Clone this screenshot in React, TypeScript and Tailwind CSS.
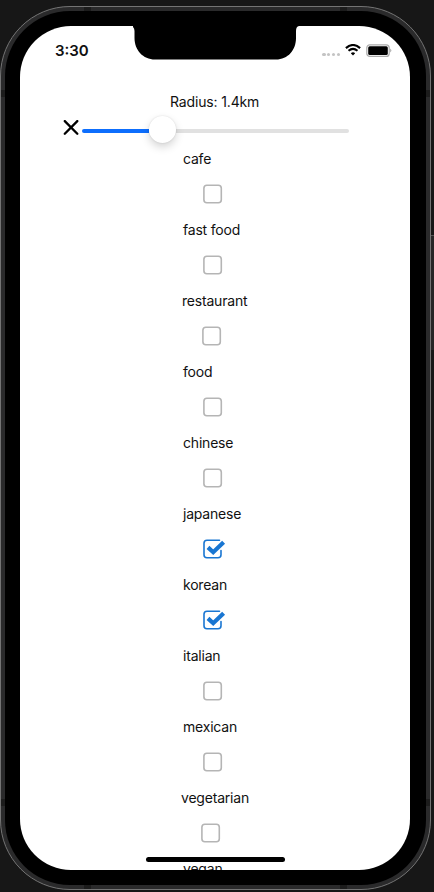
type Category = { name: string; checked?: boolean; text: string; box: string };

const categories: Category[] = [
  { name: "cafe", text: "ml-[163px]", box: "ml-[183px]" },
  { name: "fast food", text: "ml-[163px]", box: "ml-[183px]" },
  { name: "restaurant", text: "ml-[162px]", box: "ml-[182px]" },
  { name: "food", text: "ml-[163px]", box: "ml-[183px]" },
  { name: "chinese", text: "ml-[163px]", box: "ml-[183px]" },
  { name: "japanese", checked: true, text: "ml-[163px]", box: "ml-[183px]" },
  { name: "korean", checked: true, text: "ml-[163px]", box: "ml-[183px]" },
  { name: "italian", text: "ml-[163px]", box: "ml-[183px]" },
  { name: "mexican", text: "ml-[163px]", box: "ml-[183px]" },
  { name: "vegetarian", text: "ml-[161px]", box: "ml-[181px]" },
  { name: "vegan", text: "ml-[163px]", box: "ml-[183px]" },
];

function Checkbox({ checked }: { checked?: boolean }) {
  return (
    <svg width="24" height="20" viewBox="0 0 24 20" fill="none">
      {checked ? (
        <>
          <path
            d="M16.5 1.3H4A3 3 0 0 0 1 4.3V15.7A3 3 0 0 0 4 18.7H15A3 3 0 0 0 18 15.7V11.5"
            stroke="#1976d2"
            strokeWidth="1.6"
            strokeLinecap="round"
          />
          <path d="M5 8.4L10.2 13.2L20.6 3.3" stroke="#1976d2" strokeWidth="4.2" />
        </>
      ) : (
        <rect x="0.9" y="1.2" width="17.4" height="17.6" rx="3" stroke="#b5b5b5" strokeWidth="1.6" />
      )}
    </svg>
  );
}

function StatusBar() {
  return (
    <header className="relative flex h-[66px] items-start">
      <span className="ml-[35px] mt-[15px] text-[15px] font-semibold leading-[20px]">3:30</span>
      <svg className="absolute left-[113px] top-0" width="166" height="34" viewBox="0 0 166 34">
        <path d="M-3 -1H168V0H167Q163 0 163 5V12C163 24 155 33.5 143 33.5H22C10 33.5 1.5 24 1.5 12V5Q1.5 0 -3 0Z" fill="#000" />
      </svg>
      <div className="ml-auto mr-[18px] mt-[15px] flex h-[18px] items-center">
        <div className="mr-[5px] mt-[9px] flex gap-[1.5px]">
          {[0, 1, 2, 3].map((i) => (
            <span key={i} className="size-[3.3px] rounded-full bg-[#c4c4c4]" />
          ))}
        </div>
        <svg width="16" height="12" viewBox="0 0 16 12" fill="none" stroke="#000">
          <path d="M.9 4.1Q8-2.1 15.1 4.1" strokeWidth="2.1" />
          <path d="M3.5 6.8Q8 2.9 12.5 6.8" strokeWidth="2" />
          <path d="M8 11.5L5.8 9.3Q8 7.4 10.2 9.3Z" fill="#000" stroke="none" />
        </svg>
        <svg className="ml-[5px]" width="26" height="13" viewBox="0 0 26 13">
          <rect x=".8" y=".8" width="22.4" height="11.6" rx="3" fill="#fff" stroke="#aaa" strokeWidth="1.2" />
          <rect x="2.2" y="2.2" width="19.6" height="8.8" rx="1.5" />
          <path d="M24.2 4.6Q26.5 6.5 24.2 8.4Z" fill="#aaa" />
        </svg>
      </div>
    </header>
  );
}

function RadiusSlider() {
  return (
    <section className="h-[55px]">
      <div className="ml-[150px] flex h-[19px] items-center whitespace-nowrap text-[14px] tracking-[-0.15px]">Radius: 1.4km</div>
      <div className="ml-[43px] flex h-[36px] items-start">
        <svg className="mt-[9px]" width="16" height="16" viewBox="0 0 16 16" fill="none" stroke="#000" strokeWidth="2.3" strokeLinecap="round">
          <path d="M1.8 1.1L14.3 13.7M14.3 1.1L1.8 13.7" />
        </svg>
        <div className="ml-[2.5px] flex h-[39px] w-[267px] items-center">
          <div className="h-[4px] w-[67px] rounded-l-full bg-[#0d6efd]" />
          <div className="z-10 mb-[2px] size-[27px] rounded-full bg-white shadow-[0_4px_9px_rgba(0,0,0,0.17),0_0_2px_rgba(0,0,0,0.12)]" />
          <div className="h-[4px] flex-1 rounded-r-full bg-[#e1e1e1]" />
        </div>
      </div>
    </section>
  );
}

const marks = [
  "left-[84px] top-[7px] h-[4px] w-[7px]",
  "left-[340px] top-[7px] h-[4px] w-[7px]",
  "left-[84px] top-[885px] h-[4px] w-[7px]",
  "left-[340px] top-[885px] h-[4px] w-[7px]",
  "left-[1px] top-[90px] h-[7px] w-[4px]",
  "left-[426px] top-[90px] h-[7px] w-[4px]",
  "left-[1px] top-[799px] h-[7px] w-[4px]",
  "left-[426px] top-[799px] h-[7px] w-[4px]",
];

export default function App() {
  return (
    <div className="relative h-[892px] w-[434px] overflow-hidden bg-[#171717] pt-[6px] font-['Inter',sans-serif] text-[#111]">
      <div className="absolute left-[431px] top-[235px] h-[115px] w-[3px] border-t border-[#555] bg-[#262626]" />
      <div className="h-[884px] w-[431px] rounded-[70px] border border-[#747474] bg-[#2a2a2b] p-[4px]">
        <div className="h-[874px] w-[421px] rounded-[65px] bg-black pl-[15px] pt-[15px]">
          <main className="relative h-[844px] w-[390px] overflow-hidden rounded-[51px] bg-white">
            <StatusBar />
            <RadiusSlider />
            <ul>
              {categories.map((c) => (
                <li key={c.name} className="h-[71px]">
                  <div className={`flex h-[22px] items-center whitespace-nowrap text-[14px] tracking-[-0.2px] ${c.text}`}>{c.name}</div>
                  <div className={`mt-[15px] ${c.box}`}>
                    <Checkbox checked={c.checked} />
                  </div>
                </li>
              ))}
            </ul>
            <div className="absolute left-[126px] top-[831px] h-[5px] w-[139px] rounded-full bg-black" />
          </main>
        </div>
      </div>
      {marks.map((m) => (
        <div key={m} className={`absolute bg-[#1c1c1c] ${m}`} />
      ))}
    </div>
  );
}
